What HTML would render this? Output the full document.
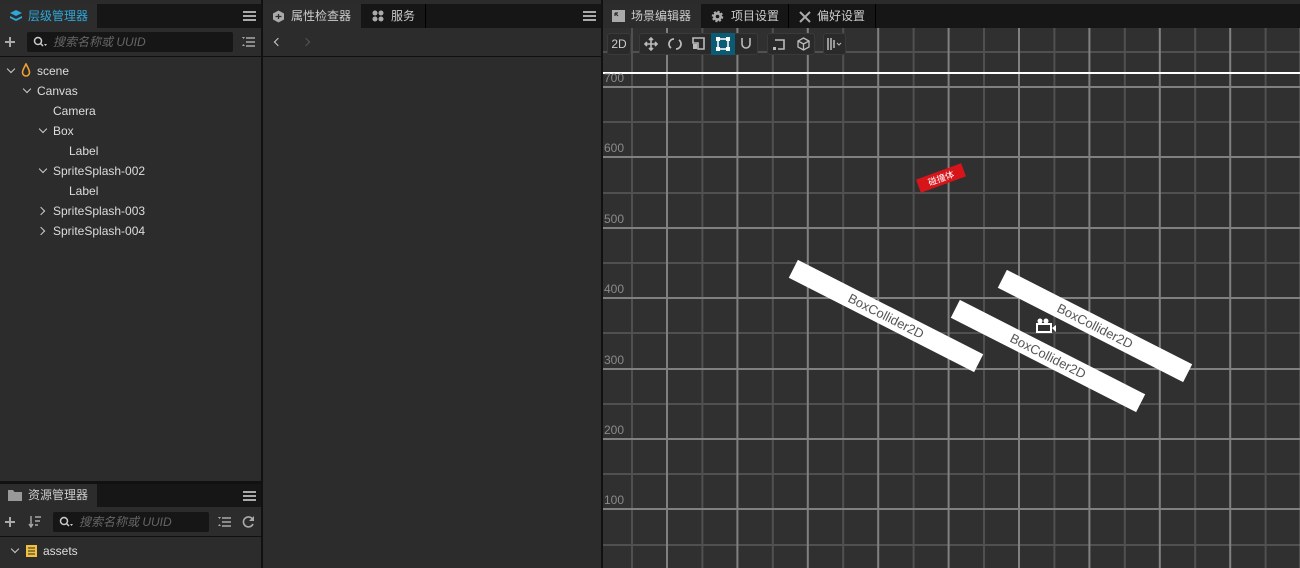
<!DOCTYPE html>
<html><head><meta charset="utf-8"><style>
*{margin:0;padding:0;box-sizing:border-box}
body{width:1300px;height:568px;background:#2c2c2c;position:relative;overflow:hidden;font-family:"Liberation Sans","Noto Sans CJK SC",sans-serif;font-size:12px;color:#ccc}
.abs{position:absolute}
.tabbar{background:#161616;height:24px;top:4px}
.tab{position:absolute;top:0;height:24px;line-height:24px;font-size:12px;color:#ccc;padding-left:28px}
.tab.act{background:#2c2c2c}
.menu{position:absolute;top:7px;width:13px;height:10px;border-top:2px solid #aaa;border-bottom:2px solid #aaa}
.menu:after{content:"";position:absolute;left:0;right:0;top:2px;border-top:2px solid #aaa}
.search{position:absolute;height:20px;background:#161616;border-radius:2px;color:#666;font-style:italic;line-height:20px;padding-left:26px;font-size:12px}
.row{position:absolute;font-size:12px;color:#ddd;height:20px;line-height:20px}
.chev{position:absolute;width:6px;height:6px;border-right:1.5px solid #ccc;border-bottom:1.5px solid #ccc}
.btn{position:absolute;top:33px;height:22px;background:#2a2a2a;border-radius:3px;border:1px solid #3a3a3a}
</style></head><body>
<div class="abs" style="left:0;top:0;width:1300px;height:4px;background:#2b2b2b"></div>
<div class="abs tabbar" style="left:0;width:261px"></div>
<div class="tab act" style="left:0;top:4px;width:97px;color:#2fa7d9">层级管理器</div>
<svg class="abs" style="left:9px;top:9px" width="14" height="14" viewBox="0 0 14 14"><path d="M7 1L13 4L7 7L1 4Z" fill="#2fa7d9"/><path d="M1 7L7 10L13 7L13 9L7 12L1 9Z" fill="#2fa7d9"/></svg>
<div class="menu" style="left:243px;top:11px"></div>
<div class="abs" style="left:0;top:56px;width:261px;height:1px;background:#111"></div>
<div class="abs" style="left:5px;top:41px;width:10px;height:1.5px;background:#aaa"></div><div class="abs" style="left:9px;top:37px;width:1.5px;height:10px;background:#aaa"></div>
<div class="search" style="left:27px;top:32px;width:206px">搜索名称或 UUID</div>
<svg class="abs" style="left:33px;top:36px" width="14" height="12"><circle cx="5" cy="5" r="3.5" stroke="#ccc" stroke-width="1.5" fill="none"/><path d="M7.5 7.5L10 10" stroke="#ccc" stroke-width="1.5"/><path d="M11 8l3 0-1.5 2z" fill="#ccc"/></svg>
<svg class="abs" style="left:242px;top:36px" width="14" height="12"><path d="M4 2h9M4 6h9M4 10h9" stroke="#aaa" stroke-width="1.5"/><path d="M0 1l3 0-1.5 2zM0 10l3 0-1.5-2z" fill="#aaa"/></svg>
<div class="chev" style="left:8px;top:66px;transform:rotate(45deg)"></div>
<svg class="abs" style="left:21px;top:63px" width="10" height="14"><path d="M5 1C3 5 1.5 7 1.5 9.5A3.5 3.5 0 0 0 8.5 9.5C8.5 7 7 5 5 1Z" stroke="#f0a030" stroke-width="1.6" fill="none"/></svg>
<div class="row" style="left:37px;top:61px">scene</div>
<div class="chev" style="left:24px;top:86px;transform:rotate(45deg)"></div>
<div class="row" style="left:37px;top:81px">Canvas</div>
<div class="row" style="left:53px;top:101px">Camera</div>
<div class="chev" style="left:40px;top:126px;transform:rotate(45deg)"></div>
<div class="row" style="left:53px;top:121px">Box</div>
<div class="row" style="left:69px;top:141px">Label</div>
<div class="chev" style="left:40px;top:166px;transform:rotate(45deg)"></div>
<div class="row" style="left:53px;top:161px">SpriteSplash-002</div>
<div class="row" style="left:69px;top:181px">Label</div>
<div class="chev" style="left:38px;top:208px;transform:rotate(-45deg)"></div>
<div class="row" style="left:53px;top:201px">SpriteSplash-003</div>
<div class="chev" style="left:38px;top:228px;transform:rotate(-45deg)"></div>
<div class="row" style="left:53px;top:221px">SpriteSplash-004</div>
<div class="abs" style="left:0;top:481px;width:261px;height:3px;background:#111"></div>
<div class="abs tabbar" style="left:0;top:484px;width:261px;height:23px"></div>
<div class="tab act" style="left:0;top:484px;width:97px;height:23px;line-height:23px">资源管理器</div>
<svg class="abs" style="left:8px;top:489px" width="14" height="12"><path d="M0 1h5l1.5 2H14v9H0z" fill="#999"/></svg>
<div class="menu" style="left:243px;top:491px"></div>
<div class="abs" style="left:0;top:536px;width:261px;height:1px;background:#111"></div>
<div class="abs" style="left:5px;top:521px;width:10px;height:1.5px;background:#aaa"></div><div class="abs" style="left:9px;top:517px;width:1.5px;height:10px;background:#aaa"></div>
<svg class="abs" style="left:28px;top:515px" width="14" height="14"><path d="M3 1v11M1 9l2 3 2-3M7 2h6M7 6h5M7 10h3" stroke="#aaa" stroke-width="1.4" fill="none"/></svg>
<div class="search" style="left:53px;top:512px;width:156px">搜索名称或 UUID</div>
<svg class="abs" style="left:59px;top:516px" width="14" height="12"><circle cx="5" cy="5" r="3.5" stroke="#ccc" stroke-width="1.5" fill="none"/><path d="M7.5 7.5L10 10" stroke="#ccc" stroke-width="1.5"/><path d="M11 8l3 0-1.5 2z" fill="#ccc"/></svg>
<svg class="abs" style="left:218px;top:516px" width="14" height="12"><path d="M4 2h9M4 6h9M4 10h9" stroke="#aaa" stroke-width="1.5"/><path d="M0 1l3 0-1.5 2zM0 10l3 0-1.5-2z" fill="#aaa"/></svg>
<svg class="abs" style="left:242px;top:515px" width="13" height="13"><path d="M10.5 4A5 5 0 1 0 11 9" stroke="#aaa" stroke-width="1.6" fill="none"/><path d="M12 1v5H7z" fill="#aaa"/></svg>
<div class="chev" style="left:12px;top:546px;transform:rotate(45deg)"></div>
<svg class="abs" style="left:26px;top:545px" width="11" height="12"><rect x="0" y="0" width="11" height="12" fill="#f0c040"/><path d="M2 3h7M2 6h7M2 9h7" stroke="#2c2c2c" stroke-width="1"/></svg>
<div class="row" style="left:43px;top:541px">assets</div>
<div class="abs" style="left:261px;top:0;width:2px;height:568px;background:#111"></div>
<div class="abs" style="left:601px;top:0;width:2px;height:568px;background:#111"></div>
<div class="abs tabbar" style="left:263px;width:338px"></div>
<div class="tab act" style="left:263px;top:4px;width:98px">属性检查器</div>
<svg class="abs" style="left:272px;top:10px" width="13" height="13"><path d="M6.5 0.5L12 3.5V9.5L6.5 12.5L1 9.5V3.5Z" fill="#aaa"/><path d="M3.5 6.5h6M6.5 4v5" stroke="#2c2c2c" stroke-width="1.3"/></svg>
<div class="tab" style="left:363px;top:4px;color:#ccc">服务</div>
<svg class="abs" style="left:372px;top:10px" width="12" height="12"><circle cx="3" cy="3" r="2.5" fill="#aaa"/><circle cx="9" cy="3" r="2.5" fill="#aaa"/><circle cx="3" cy="9" r="2.5" fill="#aaa"/><circle cx="9" cy="9" r="2.5" fill="#aaa"/></svg>
<div class="abs" style="left:425px;top:4px;width:1px;height:24px;background:#000"></div>
<div class="menu" style="left:583px;top:11px"></div>
<div class="chev" style="left:275px;top:39px;transform:rotate(135deg);border-color:#ccc"></div>
<div class="chev" style="left:303px;top:39px;transform:rotate(-45deg);border-color:#555"></div>
<div class="abs" style="left:263px;top:56px;width:338px;height:1px;background:#111"></div>
<div class="abs tabbar" style="left:603px;width:697px"></div>
<div class="tab act" style="left:603px;top:4px;width:98px">场景编辑器</div>
<svg class="abs" style="left:612px;top:10px" width="13" height="12"><rect width="13" height="12" fill="#aaa"/><path d="M3 3l3 3M3 3v3M3 3h3" stroke="#2c2c2c" stroke-width="1.2"/></svg>
<div class="tab" style="left:703px;top:4px">项目设置</div>
<svg class="abs" style="left:711px;top:10px" width="13" height="13"><circle cx="6.5" cy="6.5" r="4.5" fill="#aaa" stroke="#aaa" stroke-width="2.5" stroke-dasharray="2 1.5"/><circle cx="6.5" cy="6.5" r="1.8" fill="#161616"/></svg>
<div class="abs" style="left:788px;top:4px;width:1px;height:24px;background:#000"></div>
<div class="tab" style="left:789px;top:4px">偏好设置</div>
<svg class="abs" style="left:798px;top:10px" width="14" height="13"><path d="M2 12L12 2M2 2l10 10" stroke="#aaa" stroke-width="2"/></svg>
<div class="abs" style="left:875px;top:4px;width:1px;height:24px;background:#000"></div>
<svg class="abs" style="left:603px;top:28px" width="697" height="540">
<rect width="697" height="540" fill="#303030"/>
<g stroke="#505050" stroke-width="2">
<path d="M29 0V540M99.4 0V540M169.8 0V540M240.2 0V540M310.6 0V540M381 0V540M451.4 0V540M521.8 0V540M592.2 0V540M662.6 0V540"/>
<path d="M0 24H697M0 94H697M0 165H697M0 235H697M0 305H697M0 376H697M0 446H697M0 517H697"/>
</g>
<g stroke="#808080" stroke-width="2">
<path d="M64 0V540M134.4 0V540M204.8 0V540M275.2 0V540M345.6 0V540M416 0V540M486.4 0V540M556.8 0V540M627.2 0V540M697.6 0V540"/>
<path d="M0 59H697M0 129H697M0 200H697M0 270H697M0 341H697M0 411H697M0 481H697"/>
</g>
<path d="M0 45H697" stroke="#fff" stroke-width="2"/>
<g fill="#8a8a8a" font-size="12" font-family="Liberation Sans,sans-serif">
<text x="1" y="54">700</text><text x="1" y="124">600</text><text x="1" y="195">500</text><text x="1" y="265">400</text><text x="1" y="336">300</text><text x="1" y="406">200</text><text x="1" y="476">100</text>
</g>
<g transform="translate(283,288) rotate(27)"><rect x="-104" y="-10" width="208" height="20" fill="#fff"/><text x="0" y="4.5" text-anchor="middle" font-size="13" fill="#555" font-family="Liberation Sans,sans-serif">BoxCollider2D</text></g>
<g transform="translate(445,328) rotate(27)"><rect x="-104" y="-10" width="208" height="20" fill="#fff"/><text x="0" y="4.5" text-anchor="middle" font-size="13" fill="#555" font-family="Liberation Sans,sans-serif">BoxCollider2D</text></g>
<g transform="translate(492,298) rotate(27)"><rect x="-104" y="-10" width="208" height="20" fill="#fff"/><text x="0" y="4.5" text-anchor="middle" font-size="13" fill="#555" font-family="Liberation Sans,sans-serif">BoxCollider2D</text></g>
<g transform="translate(338,150) rotate(-20)"><rect x="-24" y="-7" width="48" height="14" fill="#d7141a"/><text x="0" y="3.5" text-anchor="middle" font-size="9" fill="#fff" font-family="Noto Sans CJK SC,sans-serif">碰撞体</text></g>
<g transform="translate(434,290)" fill="#fff"><circle cx="3" cy="3" r="2.5"/><circle cx="9" cy="3" r="2.5"/><rect x="0" y="6" width="14" height="8" fill="none" stroke="#fff" stroke-width="2"/><path d="M15 10l4-3v7z"/></g>
</svg>
<div class="btn" style="left:607px;width:24px;color:#ccc;text-align:center;line-height:20px;font-size:12px">2D</div>
<div class="btn" style="left:639px;width:119px"></div>
<div class="abs" style="left:711px;top:33px;width:24px;height:22px;background:#0c5b74"></div>
<svg class="abs" style="left:643px;top:37px" width="16" height="14"><path d="M8 1v12M2 7h12M6 3l2-2 2 2M6 11l2 2 2-2M4 5l-2 2 2 2M12 5l2 2-2 2" stroke="#bbb" stroke-width="1.6" fill="none"/></svg>
<svg class="abs" style="left:668px;top:37px" width="14" height="14"><path d="M3 11A5 5 0 0 1 6 2M11 3A5 5 0 0 1 8 12" stroke="#bbb" stroke-width="1.8" fill="none"/></svg>
<svg class="abs" style="left:692px;top:37px" width="13" height="13"><path d="M1 1h11v11H6V6H1z" stroke="#bbb" stroke-width="1.6" fill="none"/><rect x="1" y="7" width="4" height="5" fill="#bbb"/></svg>
<svg class="abs" style="left:716px;top:37px" width="14" height="14"><rect x="2" y="2" width="10" height="10" stroke="#fff" stroke-width="1.5" fill="none"/><rect x="0" y="0" width="4" height="4" fill="#fff"/><rect x="10" y="0" width="4" height="4" fill="#fff"/><rect x="0" y="10" width="4" height="4" fill="#fff"/><rect x="10" y="10" width="4" height="4" fill="#fff"/></svg>
<svg class="abs" style="left:740px;top:38px" width="12" height="12"><path d="M2 0v6a4 4 0 0 0 8 0V0" stroke="#bbb" stroke-width="1.6" fill="none"/></svg>
<div class="btn" style="left:767px;width:48px"></div>
<svg class="abs" style="left:773px;top:38px" width="13" height="13"><path d="M2 2h9v9H5" stroke="#bbb" stroke-width="1.6" fill="none"/><rect x="0" y="9" width="3" height="3" fill="#bbb"/></svg>
<svg class="abs" style="left:797px;top:37px" width="13" height="14"><path d="M6.5 1L12 4v6l-5.5 3L1 10V4z M1 4l5.5 3L12 4M6.5 7v6" stroke="#bbb" stroke-width="1.3" fill="none"/></svg>
<div class="btn" style="left:823px;width:23px"></div>
<svg class="abs" style="left:827px;top:38px" width="16" height="12"><path d="M1 0v12M4 0v12M7 2v8" stroke="#bbb" stroke-width="1.5"/><path d="M10 5l2 2 2-2" stroke="#bbb" stroke-width="1" fill="none"/></svg>
</body></html>
